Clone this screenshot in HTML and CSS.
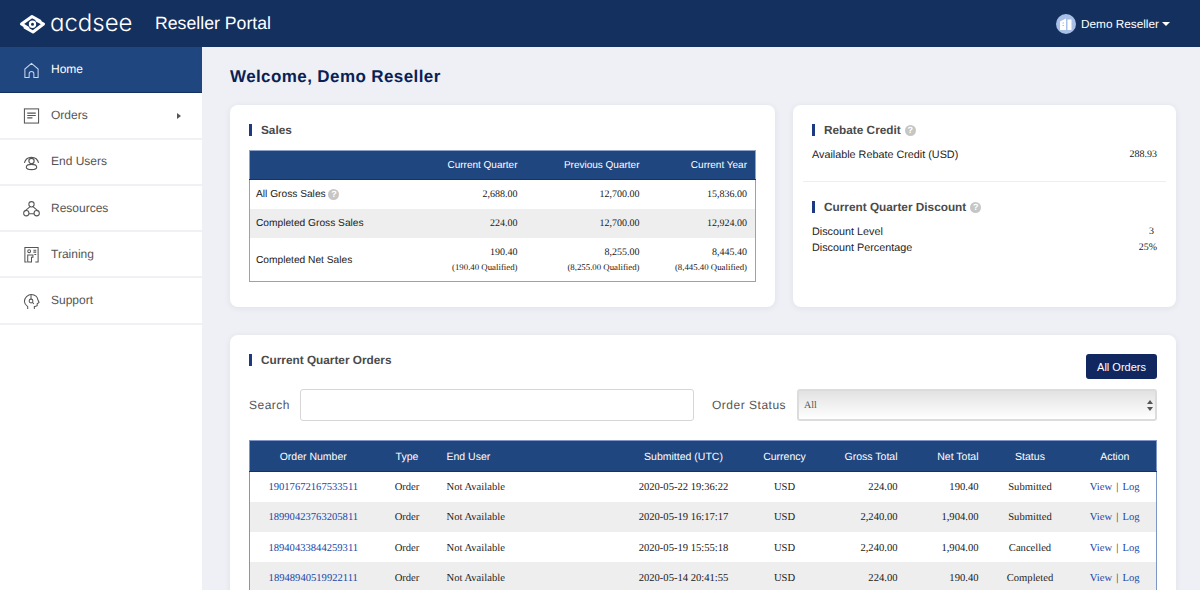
FILE: index.html
```html
<!DOCTYPE html>
<html lang="en">
<head>
  <meta charset="UTF-8" />
  <title>Reseller Portal</title>
  <link rel="stylesheet" href="styles.css">
</head>
<body>

  <header class="topbar">
    <div class="logo">
      <svg class="logo-mark" width="27" height="24" viewBox="0 0 27 24" fill="none" stroke="#fff" stroke-width="3" stroke-linejoin="round" stroke-linecap="round">
        <path d="M9 16L2.500 12L13 4.500L21 9"/>
        <path d="M18 8.500L24.500 12L14 20L6 15.500"/>
        <circle cx="13.500" cy="12.300" r="2.600" stroke-width="2.200"/>
      </svg>
      <span class="logo-text">acdsee</span>
    </div>
    <div class="portal-name">Reseller Portal</div>
    <div class="user-menu">
      <span class="avatar">
        <svg width="20" height="20" viewBox="0 0 20 20">
          <circle cx="10" cy="10" r="10" fill="#a9c0e6"/>
          <path d="M4 16V7.500L10 4.500V16Z" fill="#fff"/>
          <path d="M11.500 16V5.500H15.500V16Z" fill="#fff"/>
          <path d="M6.500 9H8M6.500 11.500H8" stroke="#a9c0e6" stroke-width="1.200"/>
        </svg>
      </span>
      <span>Demo Reseller</span>
      <span class="caret"></span>
    </div>
  </header>

  <div class="layout">
    <nav class="sidebar">
      <a class="nav-item active">
        <svg class="nav-icon" width="17" height="17" viewBox="0 0 18 18" fill="none" stroke="#c9d6ec" stroke-width="1.100">
          <path d="M2 16.500V7.500L9 1.500L16 7.500V16.500H11.500V12.500A2.500 2.500 0 0 0 6.500 12.500V16.500Z"/>
        </svg>
        Home
      </a>
      <a class="nav-item">
        <svg class="nav-icon" width="17" height="17" viewBox="0 0 18 18" fill="none" stroke="#555" stroke-width="1.100">
          <rect x="1.500" y="2" width="15" height="15"/>
          <path d="M4.500 6.500H13.500M4.500 9H13.500M4.500 11.500H10"/>
        </svg>
        Orders
        <span class="nav-arrow"></span>
      </a>
      <a class="nav-item">
        <svg class="nav-icon" width="17" height="17" viewBox="0 0 18 18" fill="none" stroke="#555" stroke-width="1.200">
          <circle cx="9" cy="7.500" r="2.800"/>
          <path d="M1.500 9.500A7.700 7.700 0 0 1 16.500 9.500"/>
          <path d="M3.500 14C3.500 11.500 6 11 9 11S14.500 11.500 14.500 14C14.500 16 12 16.500 9 16.500S3.500 16 3.500 14Z"/>
        </svg>
        End Users
      </a>
      <a class="nav-item">
        <svg class="nav-icon" width="17" height="17" viewBox="0 0 18 18" fill="none" stroke="#555" stroke-width="1.100">
          <circle cx="9" cy="4.500" r="2.800"/>
          <circle cx="3.500" cy="14" r="2.800"/>
          <circle cx="14.500" cy="14" r="2.800"/>
          <path d="M7.500 7L1.500 12M10.500 7L16.500 12M6.300 14.500H11.700"/>
        </svg>
        Resources
      </a>
      <a class="nav-item">
        <svg class="nav-icon" width="17" height="17" viewBox="0 0 18 18" fill="none" stroke="#555" stroke-width="1.100">
          <path d="M4 17H2V1.500H16V17H13"/>
          <circle cx="6.500" cy="5.500" r="1.500"/>
          <path d="M5 17V9.500H10.500V12H9V17ZM11 4.500H14M11 6.500H14M12 9H14"/>
        </svg>
        Training
      </a>
      <a class="nav-item">
        <svg class="nav-icon" width="17" height="17" viewBox="0 0 18 18" fill="none" stroke="#555" stroke-width="1.100">
          <path d="M5 17V14.500C2.500 12.500 1.500 11 1.500 9C1.500 5 5 1.500 9 1.500C13 1.500 15.500 5 15.500 6.500L17 10L15 11.500V13.500L12 14.500V17"/>
          <circle cx="8.500" cy="8.500" r="2"/>
          <path d="M8.500 1.500V6.500M10 10L11.500 11.500"/>
        </svg>
        Support
      </a>
    </nav>

    <main class="content">
      <h1>Welcome, Demo Reseller</h1>

      <div class="top-cards">
        <section class="card sales-card">
          <h2 class="card-title">Sales</h2>
          <table class="sales-table">
            <thead>
              <tr>
                <th></th>
                <th class="col-mid">Current Quarter</th>
                <th class="col-mid">Previous Quarter</th>
                <th>Current Year</th>
              </tr>
            </thead>
            <tbody>
              <tr>
                <td class="row-label">All Gross Sales <span class="help">?</span></td>
                <td>2,688.00</td>
                <td>12,700.00</td>
                <td>15,836.00</td>
              </tr>
              <tr>
                <td class="row-label">Completed Gross Sales</td>
                <td>224.00</td>
                <td>12,700.00</td>
                <td>12,924.00</td>
              </tr>
              <tr class="tall-row">
                <td class="row-label">Completed Net Sales</td>
                <td>190.40<small>(190.40 Qualified)</small></td>
                <td>8,255.00<small>(8,255.00 Qualified)</small></td>
                <td>8,445.40<small>(8,445.40 Qualified)</small></td>
              </tr>
            </tbody>
          </table>
        </section>

        <section class="card side-card">
          <div class="side-block rebate">
            <h2 class="card-title">Rebate Credit <span class="help">?</span></h2>
            <div class="stat-row"><span>Available Rebate Credit (USD)</span><b>288.93</b></div>
          </div>
          <div class="side-block discount">
            <h2 class="card-title">Current Quarter Discount <span class="help">?</span></h2>
            <div class="stat-row"><span>Discount Level</span><b class="level">3</b></div>
            <div class="stat-row"><span>Discount Percentage</span><b>25%</b></div>
          </div>
        </section>
      </div>

      <section class="card orders-card">
        <div class="orders-head">
          <h2 class="card-title">Current Quarter Orders</h2>
          <button class="btn-primary">All Orders</button>
        </div>

        <div class="filters">
          <label class="filter-label">Search</label>
          <input class="search-input" type="text" />
          <label class="filter-label">Order Status</label>
          <div class="select-box">
            All
            <svg class="select-arrows" width="6" height="11" viewBox="0 0 6 11">
              <path d="M3 0L6 4H0ZM3 11L0 7H6Z" fill="#555"/>
            </svg>
          </div>
        </div>

        <table class="orders-table">
          <thead>
            <tr>
              <th class="col-order">Order Number</th>
              <th class="col-type">Type</th>
              <th class="col-user">End User</th>
              <th class="col-date">Submitted (UTC)</th>
              <th class="col-cur">Currency</th>
              <th class="col-gross">Gross Total</th>
              <th class="col-net">Net Total</th>
              <th class="col-status">Status</th>
              <th class="col-action">Action</th>
            </tr>
          </thead>
          <tbody>
            <tr>
              <td class="col-order"><a>19017672167533511</a></td>
              <td class="col-type">Order</td>
              <td class="col-user">Not Available</td>
              <td class="col-date">2020-05-22 19:36:22</td>
              <td class="col-cur">USD</td>
              <td class="col-gross">224.00</td>
              <td class="col-net">190.40</td>
              <td class="col-status">Submitted</td>
              <td class="col-action"><a>View</a> | <a>Log</a></td>
            </tr>
            <tr>
              <td class="col-order"><a>18990423763205811</a></td>
              <td class="col-type">Order</td>
              <td class="col-user">Not Available</td>
              <td class="col-date">2020-05-19 16:17:17</td>
              <td class="col-cur">USD</td>
              <td class="col-gross">2,240.00</td>
              <td class="col-net">1,904.00</td>
              <td class="col-status">Submitted</td>
              <td class="col-action"><a>View</a> | <a>Log</a></td>
            </tr>
            <tr>
              <td class="col-order"><a>18940433844259311</a></td>
              <td class="col-type">Order</td>
              <td class="col-user">Not Available</td>
              <td class="col-date">2020-05-19 15:55:18</td>
              <td class="col-cur">USD</td>
              <td class="col-gross">2,240.00</td>
              <td class="col-net">1,904.00</td>
              <td class="col-status">Cancelled</td>
              <td class="col-action"><a>View</a> | <a>Log</a></td>
            </tr>
            <tr>
              <td class="col-order"><a>18948940519922111</a></td>
              <td class="col-type">Order</td>
              <td class="col-user">Not Available</td>
              <td class="col-date">2020-05-14 20:41:55</td>
              <td class="col-cur">USD</td>
              <td class="col-gross">224.00</td>
              <td class="col-net">190.40</td>
              <td class="col-status">Completed</td>
              <td class="col-action"><a>View</a> | <a>Log</a></td>
            </tr>
          </tbody>
        </table>
      </section>
    </main>
  </div>

</body>
</html>
```

FILE: styles.css
```css
html, body {
  height: 100%;
  overflow: hidden;
}

body {
  margin: 0;
  background: #eef0f5;
  color: #333;
  font-family: "Liberation Sans", Arial, sans-serif;
  font-size: 12px;
  text-rendering: geometricPrecision;
}

/* Top bar */
.topbar {
  display: flex;
  align-items: center;
  height: 47px;
  padding: 0 30px 0 19px;
  box-sizing: border-box;
  background: #14305f;
  color: #fff;
}

.logo {
  display: flex;
  align-items: center;
  gap: 4px;
  width: 136px;
}

.logo-text {
  font-family: "Inter", "Lato", sans-serif;
  font-feature-settings: "cv11";
  font-weight: 300;
  font-size: 24px;
  line-height: 1;
  margin-top: -2px;
}

.portal-name {
  font-size: 17.7px;
}

.user-menu {
  display: flex;
  align-items: center;
  gap: 5px;
  margin-left: auto;
  font-size: 11.8px;
}

.avatar {
  display: flex;
  width: 20px;
  height: 20px;
}

.caret {
  border-top: 4px solid #fff;
  border-left: 4px solid transparent;
  border-right: 4px solid transparent;
  margin-left: -2px;
}

/* Sidebar */
.layout {
  display: flex;
  height: calc(100% - 47px);
}

.sidebar {
  width: 202px;
  flex-shrink: 0;
  background: #fff;
}

.nav-item {
  display: flex;
  align-items: center;
  gap: 11px;
  height: 46.3px;
  box-sizing: border-box;
  padding: 0 21px 1px 23px;
  border-bottom: 2px solid #eff1f5;
  color: #555;
  font-size: 12px;
}

.nav-item.active {
  background: #20467f;
  border-bottom: 1px solid #14305f;
  color: #fff;
}

.nav-icon {
  flex-shrink: 0;
  margin-top: 2px;
}

.nav-arrow {
  margin-left: auto;
  margin-top: 2px;
  border-left: 4px solid #555;
  border-top: 3.5px solid transparent;
  border-bottom: 3.5px solid transparent;
}

/* Content */
.content {
  flex: 1;
  padding: 0 24px 0 28px;
}

h1 {
  margin: 20px 0 19px;
  color: #0c1f55;
  font-size: 17px;
  line-height: 19px;
  letter-spacing: 0.4px;
}

.top-cards {
  display: grid;
  grid-template-columns: 545px 383px;
  gap: 18px;
  margin-bottom: 28px;
}

.card {
  background: #fff;
  border-radius: 8px;
  box-shadow: 0 1px 6px rgba(30, 50, 90, 0.08);
}

.card-title {
  display: flex;
  align-items: center;
  gap: 4px;
  margin: 0;
  padding-left: 9px;
  border-left: 3px solid #1b3a80;
  color: #4a4a4a;
  font-size: 11.8px;
  line-height: 12px;
}

.help {
  display: inline-block;
  width: 11px;
  height: 11px;
  border-radius: 50%;
  background: #c6c6c6;
  color: #fff;
  font-size: 9px;
  font-weight: bold;
  line-height: 11px;
  text-align: center;
}

/* Sales table */
.sales-card {
  height: 202px;
  padding: 19px;
  box-sizing: border-box;
}

table {
  width: 100%;
  border-collapse: collapse;
  table-layout: fixed;
}

.sales-table {
  margin-top: 14px;
  border: 1px solid #8fa3c7;
}

th {
  background: #20467f;
  color: #fff;
  font-size: 10.5px;
  font-weight: normal;
  box-sizing: border-box;
}

td {
  font-family: "Liberation Serif", "Times New Roman", serif;
  font-size: 10.6px;
  color: #222;
  box-sizing: border-box;
}

.sales-table th {
  height: 29px;
  padding: 1px 8px 0;
  font-size: 10px;
  text-align: right;
  border-bottom: 1px solid #123278;
}

.sales-table td {
  height: 29px;
  padding: 1px 8px 0;
  font-size: 10px;
  text-align: right;
}

.sales-table tr:nth-child(2) td {
  background: #eee;
}

.sales-table .col-mid {
  width: 122px;
}

.sales-table th:last-child {
  width: 108px;
}

.sales-table .row-label {
  font-family: "Liberation Sans", Arial, sans-serif;
  font-size: 10.2px;
  text-align: left;
  padding-left: 6px;
}

.sales-table .tall-row td {
  height: 44px;
  padding-top: 2px;
  line-height: 15px;
}

small {
  display: block;
  font-size: 8.8px;
}

/* Rebate and discount */
.side-card {
  height: 202px;
  padding: 0 10px;
  box-sizing: border-box;
}

.side-block {
  box-sizing: border-box;
  padding: 19px 9px 0;
}

.rebate {
  height: 77px;
  border-bottom: 1px solid #eceef2;
}

.stat-row {
  display: flex;
  justify-content: space-between;
  line-height: 16px;
  font-size: 10.8px;
  color: #222;
}

.side-block .card-title + .stat-row {
  margin-top: 11px;
}

.stat-row b {
  font-family: "Liberation Serif", "Times New Roman", serif;
  font-size: 10px;
  font-weight: normal;
}

.stat-row .level {
  margin-right: 3px;
}

/* Orders */
.orders-card {
  padding: 19px;
  height: 300px;
  box-sizing: border-box;
}

.orders-head {
  display: flex;
  align-items: flex-start;
  justify-content: space-between;
}

.btn-primary {
  height: 25px;
  width: 71px;
  border: 0;
  border-radius: 3px;
  background: #10275f;
  color: #fff;
  font-family: "Liberation Sans", Arial, sans-serif;
  font-size: 11px;
}

.filters {
  display: flex;
  align-items: center;
  margin-top: 10px;
}

.filter-label {
  color: #555;
  font-size: 12px;
  letter-spacing: 0.5px;
  white-space: nowrap;
}

.search-input {
  width: 394px;
  height: 32px;
  margin: 0 18px 0 10px;
  padding: 0;
  box-sizing: border-box;
  border: 1px solid #d6d6d6;
  border-radius: 3px;
}

.select-box {
  position: relative;
  display: flex;
  align-items: center;
  flex: 1;
  height: 32px;
  margin-left: 11px;
  padding-left: 5px;
  box-sizing: border-box;
  border: 2px solid #dcdcdc;
  border-radius: 3px;
  background: linear-gradient(#e2e2e2, #fff);
  color: #555;
  font-family: "Liberation Serif", "Times New Roman", serif;
  font-size: 10px;
}

.select-arrows {
  position: absolute;
  right: 2px;
  top: 9px;
}

.orders-table {
  margin-top: 19px;
  border: 1px solid #7e96c6;
}

.orders-table th {
  height: 31px;
  padding: 1px 0 0;
  border-bottom: 1px solid #123278;
}

.orders-table td {
  height: 30.3px;
  padding: 2px 0 0;
}

.orders-table tbody tr:nth-child(even) td {
  background: #eee;
}

.orders-table a {
  color: #2148a8;
}

.orders-table .col-order { width: 127px; text-align: center; }
.orders-table .col-type { width: 61px; text-align: center; }
.orders-table .col-user { width: 186px; text-align: left; padding-left: 9px; }
.orders-table .col-date { width: 120px; text-align: center; }
.orders-table .col-cur { width: 82px; text-align: center; }
.orders-table .col-gross { width: 80px; text-align: right; padding-right: 8px; }
.orders-table .col-net { width: 81px; text-align: right; padding-right: 8px; }
.orders-table .col-status { width: 87px; text-align: center; }
.orders-table .col-action { text-align: center; word-spacing: 1.500px; }
```
